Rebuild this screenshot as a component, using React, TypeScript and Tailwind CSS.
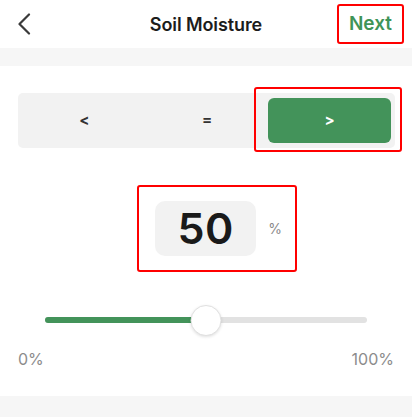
import { useState } from "react";

const GREEN = "bg-[#43935a]";

export default function App() {
  const [op, setOp] = useState<"<" | "=" | ">">(">");
  const value = 50;

  return (
    <div className="w-[412px] h-[417px] overflow-hidden bg-white font-['Inter',sans-serif] text-[#1c1c1c]">
      {/* Header */}
      <div className="relative flex h-12 items-center justify-center">
        <button className="absolute left-[12px] top-[12px] flex h-6 w-6 items-center justify-center">
          <svg width="14" height="22" viewBox="0 0 14 22" fill="none">
            <polyline
              points="12,1.5 2.5,11 12,20.5"
              stroke="#3a3a3a"
              strokeWidth="2.2"
              strokeLinecap="round"
              strokeLinejoin="round"
            />
          </svg>
        </button>
        <h1 className="text-[18px] font-semibold tracking-[-0.1px]">Soil Moisture</h1>
        <div className="absolute right-[8px] top-[4px] flex h-10 items-center rounded-[3px] border-2 border-[#ff0000] px-[10px]">
          <span className="text-[19px] font-semibold text-[#3f9457]">Next</span>
        </div>
      </div>

      <div className="h-[18px] bg-[#f6f6f6]" />

      {/* Operator */}
      <div className="mx-[18px] mr-[17px] mt-[27px] grid h-[55px] grid-cols-3 rounded-[5px] bg-[#f2f2f2] p-[5px] pr-[4px]">
        {(["<", "=", ">"] as const).map((o) => (
          <button
            key={o}
            onClick={() => setOp(o)}
            className={`relative flex items-center justify-center rounded-[6px] text-[15px] font-bold ${
              op === o ? `${GREEN} text-white` : "text-[#333]"
            }`}
          >
            {o}
            {o === ">" && (
              <span className="pointer-events-none absolute -bottom-[9px] -left-[14px] -right-[11px] -top-[11px] rounded-[3px] border-2 border-[#ff0000]" />
            )}
          </button>
        ))}
      </div>

      {/* Value */}
      <div className="mt-[37px] flex justify-center">
        <div className="ml-[22px] flex items-center gap-3 rounded-[3px] border-2 border-[#ff0000] py-[14px] pl-4 pr-[13px]">
          <div className="flex h-[55px] w-[101px] items-center justify-center rounded-[10px] bg-[#f2f2f2]">
            <span className="text-[43px] font-semibold leading-none tracking-[0.5px] text-[#1a1a1a]">{value}</span>
          </div>
          <span className="text-[14px] text-[#8a8a8a]">%</span>
        </div>
      </div>

      {/* Slider */}
      <div className="relative mx-[45px] mt-[33px] h-[31px]">
        <div className="absolute left-0 right-0 top-[12px] h-[6px] rounded-full bg-[#e2e2e2]" />
        <div
          className={`absolute left-0 top-[12px] h-[6px] rounded-full ${GREEN}`}
          style={{ width: `${value}%` }}
        />
        <div
          className="absolute top-0 h-[31px] w-[31px] -translate-x-1/2 rounded-full border border-[#e0e0e0] bg-white shadow-[0_1px_3px_rgba(0,0,0,0.12)]"
          style={{ left: `${value}%` }}
        />
      </div>

      <div className="mx-[18px] mt-[13px] flex justify-between text-[16px] leading-5 text-[#8c8c8c]">
        <span>0%</span>
        <span>100%</span>
      </div>

      <div className="mt-[27px] h-[30px] bg-[#f6f6f6]" />
    </div>
  );
}
